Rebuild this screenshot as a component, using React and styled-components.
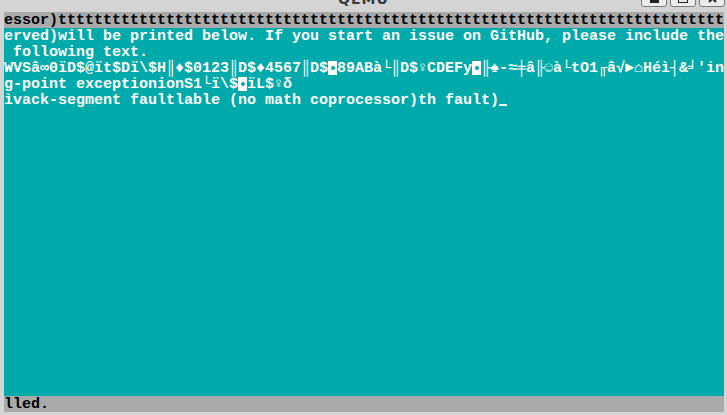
import React from "react";
import styled, { createGlobalStyle } from "styled-components";

const GlobalStyle = createGlobalStyle`
  html, body { margin: 0; padding: 0; background: #d4d4d4; overflow: hidden; }
`;

const Window = styled.div`
  width: 727px;
  height: 415px;
  display: flex;
  flex-direction: column;
  background: #d4d4d4;
`;

const TitleBar = styled.div`
  height: 12px;
  flex: none;
  display: grid;
  grid-template-columns: 1fr auto 1fr;
  grid-template-rows: 12px;
  align-items: start;
  overflow: hidden;
`;

const Title = styled.div`
  grid-column: 2;
  font-family: "DejaVu Sans", sans-serif;
  font-weight: bold;
  font-size: 14px;
  line-height: 14px;
  color: #3a3a3a;
  margin-top: -8px;
  letter-spacing: 1px;
`;

const Buttons = styled.div`
  grid-column: 3;
  justify-self: end;
  display: flex;
  gap: 3px;
  margin-right: 2px;
  margin-top: -9px;
`;

const WinButton = styled.div`
  width: 26px;
  height: 16px;
  box-sizing: border-box;
  border: 1px solid #7a7a7a;
  border-radius: 3px;
  background: #ececec;
  display: flex;
  align-items: flex-end;
  justify-content: center;
  padding-bottom: 3px;
`;

const Screen = styled.div`
  flex: none;
  margin-left: 4px;
  width: 720px;
  height: 400px;
  background: #00aaaa;
  display: grid;
  grid-template-rows: repeat(25, 16px);
`;

const Row = styled.div`
  display: grid;
  grid-template-columns: repeat(80, 9px);
  height: 16px;
  background: ${(p) => (p.$tone === "gray" ? "#aaaaaa" : "transparent")};
  color: ${(p) => (p.$tone === "gray" ? "#000000" : "#ffffff")};
  font-family: "Liberation Mono", "DejaVu Sans Mono", monospace;
  font-weight: bold;
  font-size: 15px;
  line-height: 14px;
`;

const Cell = styled.span`
  width: 9px;
  height: 14px;
  padding-top: 2px;
  display: flex;
  justify-content: center;
  white-space: pre;
`;

const InvCell = styled.span`
  width: 9px;
  height: 14px;
  margin-top: 1px;
  background: #ffffff;
  display: flex;
  align-items: center;
  justify-content: center;
  &::after {
    content: "";
    width: 4px;
    height: 4px;
    border-radius: 50%;
    background: #00aaaa;
  }
`;

const CursorCell = styled.span`
  width: 9px;
  height: 16px;
  position: relative;
  &::after {
    content: "";
    position: absolute;
    left: 0;
    right: 1px;
    top: 12px;
    height: 2px;
    background: #ffffff;
  }
`;

const lines = [
  { text: "essor)" + "t".repeat(74), tone: "gray" },
  { text: "erved)will be printed below. If you start an issue on GitHub, please include the" },
  { text: " following text." },
  { text: "WVSâ∞0ïD$@ït$Dï\\$H║♦$0123║D$♦4567║D$◘89ABà└║D$♀CDEFy◘╟♠-≈╪â╟☺à└tO1╓â√►⌂Héì┤&╛'in" },
  { text: "g-point exceptionionS1└ï\\$◘ïL$♀δ" },
  { text: "ìvack-segment faultlable (no math coprocessor)th fault)", cursor: true },
];
while (lines.length < 24) lines.push({ text: "" });
lines.push({ text: "lled.", tone: "gray" });

function TextRow({ text, tone, cursor }) {
  const chars = Array.from(text);
  return (
    <Row $tone={tone}>
      {chars.map((c, i) =>
        c === "◘" ? <InvCell key={i} /> : <Cell key={i}>{c}</Cell>
      )}
      {cursor && <CursorCell />}
    </Row>
  );
}

export default function App() {
  return (
    <>
      <GlobalStyle />
      <Window>
        <TitleBar>
          <Title>QEMU</Title>
          <Buttons>
            <WinButton>
              <svg width="9" height="3"><rect width="9" height="3" fill="#222" /></svg>
            </WinButton>
            <WinButton>
              <svg width="10" height="9"><rect x="0.5" y="0.5" width="9" height="8" fill="none" stroke="#222" /></svg>
            </WinButton>
            <WinButton>
              <svg width="9" height="9"><path d="M1 1 L8 8 M8 1 L1 8" stroke="#222" strokeWidth="2" /></svg>
            </WinButton>
          </Buttons>
        </TitleBar>
        <Screen>
          {lines.map((l, i) => (
            <TextRow key={i} {...l} />
          ))}
        </Screen>
      </Window>
    </>
  );
}
